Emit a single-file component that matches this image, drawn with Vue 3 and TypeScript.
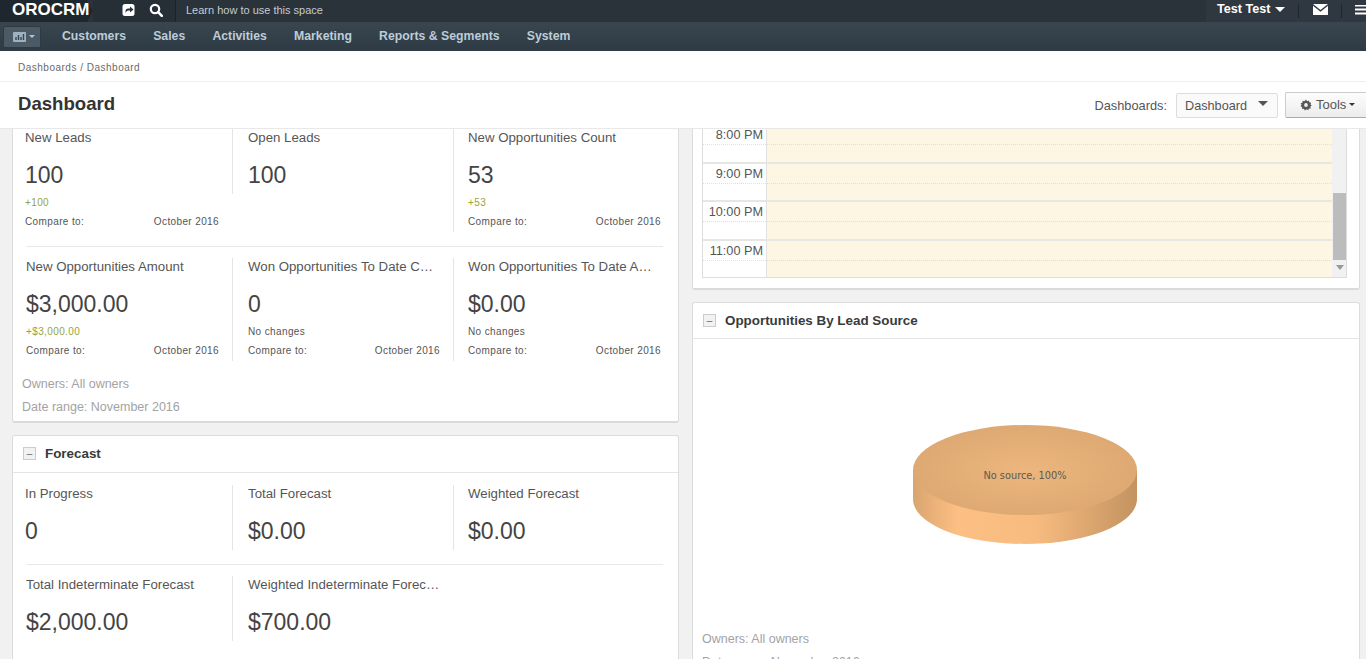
<script setup lang="ts">
interface Metric { title: string; value: string; delta?: string; tone?: string; compare?: boolean }
const row1: Metric[] = [
  { title: 'New Leads', value: '100', delta: '+100', tone: 'up', compare: true },
  { title: 'Open Leads', value: '100' },
  { title: 'New Opportunities Count', value: '53', delta: '+53', tone: 'up', compare: true },
]
const row2: Metric[] = [
  { title: 'New Opportunities Amount', value: '$3,000.00', delta: '+$3,000.00', tone: 'up', compare: true },
  { title: 'Won Opportunities To Date Count', value: '0', delta: 'No changes', compare: true },
  { title: 'Won Opportunities To Date Amount', value: '$0.00', delta: 'No changes', compare: true },
]
const row3: Metric[] = [
  { title: 'In Progress', value: '0' },
  { title: 'Total Forecast', value: '$0.00' },
  { title: 'Weighted Forecast', value: '$0.00' },
]
const row4: Metric[] = [
  { title: 'Total Indeterminate Forecast', value: '$2,000.00' },
  { title: 'Weighted Indeterminate Forecast', value: '$700.00' },
]
const groups = [[row1, row2], [row3, row4]]
const nav = ['Customers', 'Sales', 'Activities', 'Marketing', 'Reports & Segments', 'System']
const hours = ['8:00 PM', '9:00 PM', '10:00 PM', '11:00 PM']
</script>

<template>
  <div class="page">
    <header class="topbar">
      <div class="logo">OROCRM</div>
      <div class="quick">
        <svg width="14" height="14" viewBox="0 0 14 14"><rect x="0.5" y="1" width="12" height="12" rx="2.5" fill="#fff"/><path d="M3.5 10V8.2C3.5 6.6 4.6 5.6 6.2 5.6H8V3.6L11.5 6.5 8 9.4V7.5H6.6C5.4 7.5 4.5 8.2 3.5 10Z" fill="#2a323b"/></svg>
        <svg width="14" height="14" viewBox="0 0 14 14"><circle cx="6" cy="6" r="4.2" fill="none" stroke="#fff" stroke-width="2.2"/><path d="M9.2 9.2 12.8 12.8" stroke="#fff" stroke-width="2.6" stroke-linecap="round"/></svg>
      </div>
      <div class="learn">Learn how to use this space</div>
      <div class="user">
        <span class="uname">Test Test</span><i class="caret white"></i>
        <span class="sep"></span>
        <svg class="mail" width="15" height="11" viewBox="0 0 15 11"><path d="M0 0H15L7.5 6Z" fill="#fff"/><path d="M0 1.8V11H15V1.8L7.5 7.8Z" fill="#fff"/></svg>
        <span class="sep"></span>
        <svg class="burger" width="11" height="10" viewBox="0 0 11 10"><path d="M0 0.5H11M0 4.5H11M0 8.5H11" stroke="#fff" stroke-width="2"/></svg>
      </div>
    </header>
    <nav class="navbar">
      <button class="dash-btn">
        <svg width="13" height="10" viewBox="0 0 13 10"><rect width="13" height="10" rx="1" fill="#9fb2c0"/><path d="M3 8V5M5.5 8V3M8 8V5M10.5 8V2" stroke="#37444f" stroke-width="1.4"/></svg>
        <i class="caret small"></i>
      </button>
      <a v-for="n in nav" :key="n" class="nav-item">{{ n }}</a>
    </nav>
    <div class="crumbs">Dashboards / Dashboard</div>
    <div class="titlebar">
      <h1>Dashboard</h1>
      <div class="actions">
        <span class="dash-label">Dashboards:</span>
        <div class="select">Dashboard<i class="caret dark"></i></div>
        <div class="tools">
          <svg width="12" height="12" viewBox="0 0 12 12"><path d="M6 0.5 7 2.2 8.8 1.5 9.3 3.3 11.1 3.7 10.5 5.5 11.8 6.5 10.3 7.6 10.8 9.4 9 9.5 8.2 11.2 6.5 10.3 4.9 11.4 3.9 9.7 2 9.9 2.2 8 0.4 7.2 1.6 5.8 0.6 4.2 2.4 3.7 2.6 1.8 4.4 2.2Z" fill="#555"/><circle cx="6" cy="6" r="1.9" fill="#eee"/></svg>
          Tools<i class="caret dark tiny"></i>
        </div>
      </div>
    </div>
    <main class="content">
      <section class="col">
        <div v-for="(g, gi) in groups" :key="gi" class="card" :class="{ clipped: gi === 0 }">
          <div v-if="gi === 1" class="card-head"><span class="toggle">–</span>Forecast</div>
          <div class="metrics" :class="{ forecast: gi === 1 }">
            <template v-for="(row, ri) in g" :key="ri">
              <hr v-if="ri > 0" class="rule" />
              <div class="mrow" :class="{ second: ri > 0 }">
                <div v-for="(m, i) in row" :key="m.title" class="metric" :class="`c${i}`">
                  <div class="m-title">{{ m.title }}</div>
                  <div class="m-value">{{ m.value }}</div>
                  <div v-if="m.delta" class="m-delta" :class="m.tone">{{ m.delta }}</div>
                  <div v-if="m.compare" class="m-compare"><span>Compare to:</span><span>October 2016</span></div>
                </div>
              </div>
            </template>
          </div>
          <div v-if="gi === 0" class="foot">
            <div>Owners: All owners</div>
            <div>Date range: November 2016</div>
          </div>
        </div>
      </section>
      <section class="col">
        <div class="card clipped cal-card">
          <div class="calendar">
            <div class="cal-main">
              <div v-for="h in hours" :key="h" class="hour">
                <div class="gutter"><span>{{ h }}</span></div>
                <div class="slot"></div>
              </div>
            </div>
            <div class="scroll">
              <div class="thumb"></div>
              <i class="caret scrollcaret"></i>
            </div>
          </div>
        </div>
        <div class="card pie-card">
          <div class="card-head"><span class="toggle">–</span>Opportunities By Lead Source</div>
          <div class="pie">
            <svg width="226" height="122" viewBox="0 0 226 122">
              <defs>
                <linearGradient id="side" x1="0" x2="1" y1="0" y2="0">
                  <stop offset="0" stop-color="#d9a570"/>
                  <stop offset="0.2" stop-color="#fdbf83"/>
                  <stop offset="0.55" stop-color="#f7bb80"/>
                  <stop offset="1" stop-color="#c39360"/>
                </linearGradient>
                <radialGradient id="top" cx="0.5" cy="0.5" r="0.6">
                  <stop offset="0" stop-color="#ecb67e"/>
                  <stop offset="1" stop-color="#dca671"/>
                </radialGradient>
              </defs>
              <path d="M1 45V74C1 99 51 119 113 119S225 99 225 74V45Z" fill="url(#side)"/>
              <ellipse cx="113" cy="45" rx="112" ry="45" fill="url(#top)"/>
              <text x="113" y="54" text-anchor="middle" class="pie-label">No source, 100%</text>
            </svg>
          </div>
          <div class="foot right-foot">
            <div>Owners: All owners</div>
            <div>Date range: November 2016</div>
          </div>
        </div>
      </section>
    </main>
  </div>
</template>

<style>
html, body { margin: 0; overflow: hidden; }
</style>

<style scoped>
.page { width: 1366px; height: 659px; overflow: hidden; display: flex; flex-direction: column; background: #f1f1f1; font-family: "Liberation Sans", Arial, sans-serif; color: #444; }
.topbar { height: 22px; flex: none; display: flex; align-items: center; background: #2a323a; color: #fff; }
.logo { width: 93px; height: 22px; box-sizing: border-box; padding-left: 12px; font-size: 17px; font-weight: 700; line-height: 19px; background: #1f272e; clip-path: polygon(0 0, 87px 0, 93px 11px, 87px 22px, 0 22px); }
.quick { width: 83px; height: 22px; box-sizing: border-box; padding-left: 29px; display: flex; align-items: center; gap: 13px; background: #262e36; border-right: 1px solid #1b2228; }
.quick svg { margin-bottom: 3px; }
.learn { flex: 1; padding-left: 10px; font-size: 11px; color: #c4ccd3; background: #2a323a; height: 22px; line-height: 20px; }
.user { width: 160px; height: 22px; box-sizing: border-box; padding-left: 11px; display: flex; align-items: center; background: #2f3740; white-space: nowrap; overflow: hidden; }
.uname { font-size: 12.6px; font-weight: 700; line-height: 18px; margin-bottom: 4px; }
.caret { display: inline-block; width: 0; height: 0; border-left: 5px solid transparent; border-right: 5px solid transparent; border-top: 5px solid #555; }
.caret.white { border-top-color: #fff; margin-left: 5px; margin-bottom: 3px; }
.sep { width: 1px; height: 14px; background: #1e252b; margin: 0 13px 0 13px; }
.user svg { flex: none; margin-bottom: 3px; }
.mail { margin-left: 1px; }
.burger { margin-left: 1px; }
.navbar { height: 29px; flex: none; display: flex; align-items: center; background: linear-gradient(#39464f, #2e3b45); box-sizing: border-box; padding-left: 3px; }
.dash-btn { width: 38px; height: 22px; border: 1px solid #2e3a43; border-radius: 2px; background: #4c5a65; display: flex; align-items: center; gap: 3px; padding: 0 0 0 9px; box-sizing: border-box; margin-right: 21px; }
.caret.small { border-left-width: 3px; border-right-width: 3px; border-top: 3px solid #b5c3ce; }
.nav-item { font-size: 12.25px; font-weight: 700; color: #bccdd9; margin-right: 27.2px; line-height: 29px; }
.crumbs { height: 31px; flex: none; box-sizing: border-box; background: #fff; border-bottom: 1px solid #eeeeee; padding-left: 18px; font-size: 10px; letter-spacing: 0.5px; color: #6a6a6a; line-height: 33px; }
.titlebar { height: 47px; flex: none; box-sizing: border-box; background: #fff; border-bottom: 1px solid #e8e8e8; display: flex; align-items: center; justify-content: space-between; padding-left: 18px; }
h1 { margin: 0 0 3px; font-size: 18.6px; font-weight: 700; color: #333; }
.actions { display: flex; align-items: center; font-size: 13px; color: #555; }
.dash-label { margin-right: 9px; font-size: 12.8px; }
.select { width: 102px; height: 25px; box-sizing: border-box; border: 1px solid #ddd; border-radius: 2px; background: #fafafa; display: flex; align-items: center; justify-content: space-between; padding: 1px 9px 0 8px; font-size: 12.7px; margin-right: 7px; }
.select .caret { margin-bottom: 4px; }
.tools { width: 81px; height: 26px; box-sizing: border-box; border: 1px solid #ccc; border-right: 0; border-bottom-color: #aaa; border-radius: 2px 0 0 2px; background: linear-gradient(#fdfdfd, #ececec); display: flex; align-items: center; gap: 4px; padding: 0 0 1px 14px; font-size: 13px; flex: none; }
.caret.tiny { border-left-width: 3px; border-right-width: 3px; border-top-width: 3px; margin-left: -1px; border-top-color: #333; }
.content { flex: 1; min-height: 0; overflow: hidden; display: grid; grid-template-columns: 667px 668px; gap: 13px; padding-left: 12px; }
.col { display: flex; flex-direction: column; gap: 12px; }
.card { background: #fff; border: 1px solid #dcdcdc; border-bottom: 2px solid #dadada; border-radius: 3px; box-sizing: border-box; flex: none; }
.card.clipped { border-top: 0; border-radius: 0 0 3px 3px; }
.card-head { height: 37px; box-sizing: border-box; border-bottom: 1px solid #e4e4e4; display: flex; align-items: center; padding: 0 0 2px 10px; font-size: 13.4px; font-weight: 700; color: #3a3a3a; }
.pie-card .card-head { height: 36px; padding-bottom: 1px; }
.toggle { width: 13px; height: 13px; box-sizing: border-box; border: 1px solid #ccc; background: #f2f2f2; margin-right: 9px; color: #666; font-size: 10px; font-weight: 400; line-height: 11px; text-align: center; }
.metrics { padding-left: 12px; }
.metrics.forecast { padding: 12px 0 60px 12px; }
.rule { border: 0; border-top: 1px solid #e8e8e8; margin: 14px 15px 11px 1px; }
.mrow { display: grid; grid-template-columns: 207px 221px 209px; align-items: start; }
.mrow.second .metric.c0 { padding-left: 1px; }
.metric { box-sizing: border-box; min-width: 0; padding-right: 13px; }
.metric.c1 { border-left: 1px solid #e4e4e4; padding-left: 15px; }
.metric.c2 { border-left: 1px solid #e4e4e4; padding-left: 14px; padding-right: 1px; }
.m-title { font-size: 13.25px; line-height: 18px; color: #555; white-space: nowrap; overflow: hidden; text-overflow: ellipsis; }
.c2 .m-title { padding-right: 5px; }
.m-value { font-size: 23px; line-height: 30px; margin-top: 13px; padding-bottom: 4px; color: #444; }
.m-delta { font-size: 10px; letter-spacing: 0.38px; line-height: 16px; padding-top: 1px; color: #555; }
.m-delta.up { color: #97a33b; }
.m-compare { display: flex; justify-content: space-between; font-size: 10px; letter-spacing: 0.38px; line-height: 16px; margin-top: 3px; padding-bottom: 2px; color: #555; }
.foot { padding: 12px 0 0 9px; height: 60px; box-sizing: border-box; font-size: 12.5px; line-height: 23px; color: #a3a3a3; }
.cal-card { height: 161px; padding: 0 12px 0 9px; }
.calendar { display: flex; height: 153px; margin-top: -4px; border: 1px solid #ddd; border-top: 0; box-sizing: border-box; overflow: hidden; }
.cal-main { width: 629px; flex: none; }
.hour { height: 38.5px; display: flex; box-sizing: border-box; border-bottom: 2px solid #e6e6e2; position: relative; }
.hour:last-child { border-bottom: 0; }
.hour::after { content: ""; position: absolute; left: 0; right: 0; top: 19px; border-top: 1px dotted #e0e0da; }
.gutter { width: 63px; flex: none; border-right: 1px solid #e2e2e2; text-align: right; font-size: 12.7px; line-height: 20px; color: #555; }
.gutter span { padding-right: 3px; }
.slot { flex: 1; background: #fcf6e3; }
.scroll { flex: 1; background: #f1f1f1; padding: 68px 1px 0; box-sizing: border-box; display: flex; flex-direction: column; align-items: center; }
.thumb { width: 13px; height: 67px; background: #bcbcbc; flex: none; }
.caret.scrollcaret { margin-top: 5px; border-left-width: 4px; border-right-width: 4px; border-top: 5px solid #999; }
.pie { height: 279px; box-sizing: border-box; padding: 86px 0 0 219px; }
.pie svg { display: block; }
.pie-label { font-family: "DejaVu Sans", sans-serif; font-size: 9.8px; fill: #5e5a4c; }
.right-foot { height: 60px; padding: 10px 0 0 9px; line-height: 23px; }
</style>
